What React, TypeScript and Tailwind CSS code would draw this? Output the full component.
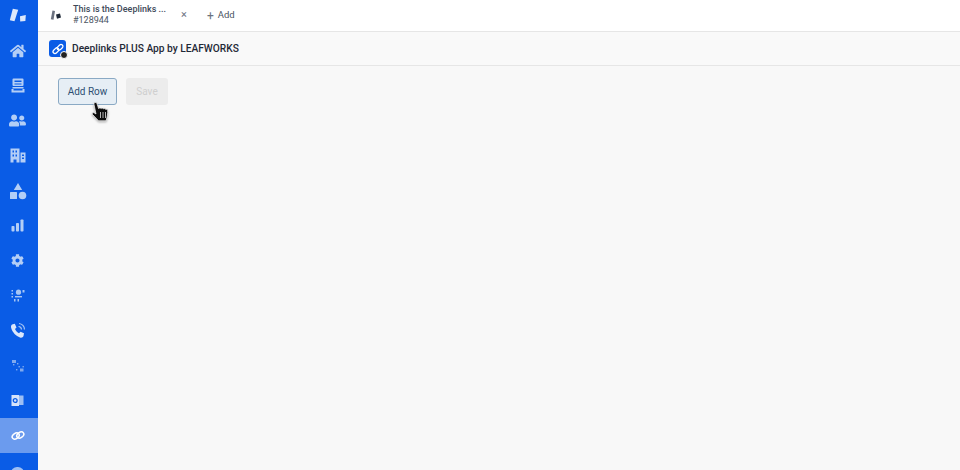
import React from "react";
import { FaHome, FaUserFriends, FaCog } from "react-icons/fa";

const ICON = "#b3cef6";

const Logo = () => (
  <svg width="20" height="20" viewBox="0 0 20 20">
    <path d="M4.800 2.800 10.200 3.700 6.500 15.200 1.800 14.200Z" fill="#dce8fb" />
    <path d="M12 10.200 17.800 9 17.400 15 12.200 15.600Z" fill="#dce8fb" />
  </svg>
);

const TabLogo = () => (
  <svg width="12" height="11" viewBox="0 0 12 11">
    <path d="M2.500 0.500 5 1 3.500 9.800 0.800 9.200Z" fill="#6b7280" />
    <path d="M6 4.500 10 3.500 11 7.500 7 8.800Z" fill="#1f2937" />
  </svg>
);

const Tickets = () => (
  <svg width="14" height="15" viewBox="0 0 14 15" fill={ICON}>
    <path fillRule="evenodd" d="M2.500 0.500h9a1 1 0 0 1 1 1v5.500a1 1 0 0 1-1 1h-9a1 1 0 0 1-1-1V1.500a1 1 0 0 1 1-1ZM3.500 2.500v1.500h7V2.500Zm0 3v1h7v-1Z" />
    <rect x="1.500" y="9" width="11" height="1.500" />
    <path d="M0.500 11h2v1.500h9V11h2v3.500h-13Z" />
  </svg>
);

const Org = () => (
  <svg width="16" height="15" viewBox="0 0 16 15" fill={ICON}>
    <path fillRule="evenodd" d="M0.500 0.500h9V14.500H6.500v-3h-3v3H0.500ZM2.500 2.500v2H4v-2Zm3 0v2H7v-2ZM2.500 6.500v2H4v-2Zm3 0v2H7v-2Z" />
    <path fillRule="evenodd" d="M10.500 4.500H15.500V14.500H10.500Zm1.500 2V8h2V6.500Zm0 3V11h2V9.500Z" />
  </svg>
);

const Shapes = () => (
  <svg width="18" height="18" viewBox="0 0 18 18" fill={ICON}>
    <path d="M9 1 13.200 8H4.800Z" />
    <rect x="1" y="10" width="7" height="7" rx="0.500" />
    <circle cx="13.500" cy="13.500" r="3.800" />
  </svg>
);

const Bars = () => (
  <svg width="13" height="13" viewBox="0 0 13 13" fill={ICON}>
    <rect x="0.500" y="7" width="3" height="5.500" rx="0.800" />
    <rect x="5" y="4" width="3" height="8.500" rx="0.800" />
    <rect x="9.500" y="0.500" width="3" height="12" rx="0.800" />
  </svg>
);

const Team = () => (
  <svg width="14" height="13" viewBox="0 0 14 13" fill="#a6c5f4">
    <circle cx="7.500" cy="3.200" r="2.600" />
    <rect x="4" y="7" width="7" height="1.400" />
    <rect x="0.500" y="1" width="1.500" height="1.500" />
    <rect x="0.500" y="4" width="1.500" height="1.500" />
    <rect x="0.500" y="7" width="1.500" height="1.500" />
    <rect x="3" y="10" width="1.500" height="2.500" />
    <rect x="6.500" y="10" width="1.500" height="2.500" />
    <rect x="11.500" y="1" width="2" height="2.500" />
  </svg>
);

const Phone = () => (
  <svg width="16" height="17" viewBox="0 0 16 17" fill="none">
    <path
      d="M2 2.500 4.800 1.800 6.500 5.500 5 7C5.700 8.800 7.300 10.500 9 11.200L10.500 9.800 14 11.300 13.500 14C13 15.500 11.500 16 10 15.500 6 14 2.500 10.500 1.200 6 .800 4.500 1 3.200 2 2.500Z"
      fill="#dbe7fb"
    />
    <path d="M9 1.500a6 6 0 0 1 5.500 6M8.500 4.500a3.200 3.200 0 0 1 3 3" stroke="#a6c5f4" strokeWidth="1.200" />
  </svg>
);

const Translate = () => (
  <svg width="14" height="14" viewBox="0 0 14 14" fill="#7fa9ee">
    <rect x="1" y="1" width="4" height="3" />
    <rect x="2" y="5" width="1.400" height="1.400" />
    <rect x="6" y="4" width="1.400" height="1.400" />
    <rect x="7.500" y="7" width="1.400" height="1.400" />
    <rect x="5" y="10" width="1.400" height="1.400" />
    <rect x="9" y="9.500" width="3.500" height="3" />
    <rect x="11.500" y="7" width="1.400" height="1.400" />
  </svg>
);

const Outlook = () => (
  <svg width="13" height="13" viewBox="0 0 13 13">
    <rect x="6" y="1.500" width="6.500" height="9.500" fill="#9dbff4" />
    <rect x="0.500" y="1" width="7.500" height="11" fill="#d5e3fa" />
    <circle cx="4.200" cy="6.500" r="1.900" fill="none" stroke="#0a5ce6" strokeWidth="1.300" />
  </svg>
);

const ChainWide = () => (
  <svg width="14" height="11" viewBox="0 0 14 11" fill="none" stroke="#ffffff" strokeWidth="1.500">
    <ellipse cx="4.700" cy="6" rx="3.800" ry="2.700" transform="rotate(-35 4.700 6)" />
    <ellipse cx="9.300" cy="5" rx="3.800" ry="2.700" transform="rotate(-35 9.300 5)" />
  </svg>
);

const ChainBadge = () => (
  <svg width="12" height="12" viewBox="0 0 12 12" fill="none" stroke="#ffffff" strokeWidth="1.300">
    <rect x="0.700" y="5.800" width="6.500" height="3.800" rx="1.900" transform="rotate(-45 3.950 7.700)" />
    <rect x="4.800" y="2.400" width="6.500" height="3.800" rx="1.900" transform="rotate(-45 8.050 4.300)" />
  </svg>
);

const navItems: React.ReactNode[] = [
  <FaHome key="home" size={16} color={ICON} />,
  <Tickets key="tickets" />,
  <FaUserFriends key="users" size={17} color={ICON} />,
  <Org key="org" />,
  <Shapes key="shapes" />,
  <Bars key="bars" />,
  <FaCog key="cog" size={13} color={ICON} />,
  <Team key="team" />,
  <Phone key="phone" />,
  <Translate key="translate" />,
  <Outlook key="outlook" />,
  <ChainWide key="link" />,
];

const HandCursor = () => (
  <svg
    width="20"
    height="21"
    viewBox="0 0 20 21"
    className="absolute left-[91px] top-[102px] drop-shadow-[0_1px_1px_rgba(0,0,0,0.35)]"
  >
    <path
      d="M3.500 .8c.9-.7 2.200-.3 2.500.8l1.600 5c.5-1 2-.9 2.500 0 .6-.8 2-.7 2.400.3.700-.6 2-.4 2.300.6.600-.4 1.700-.1 1.900.9.200 3-.3 6-1.600 10.400H7.500L1.500 12.500c-.8-1 .2-2.300 1.500-1.800L5 12 3 2.500c-.2-.7 0-1.300.5-1.700Z"
      fill="#0d0d0d"
      stroke="#ffffff"
      strokeWidth="0.700"
    />
    <path d="M9.500 10v6M12 10v6M14.500 10v6" stroke="#ffffff" strokeWidth="0.700" />
  </svg>
);

export default function App() {
  return (
    <div className="relative flex h-[470px] w-[960px] overflow-hidden bg-[#f8f8f8] font-['Roboto',sans-serif] text-[#1f2a37]">
      {/* sidebar */}
      <aside className="flex h-full w-[38px] shrink-0 flex-col overflow-hidden bg-[#0a5ce6]">
        <div className="flex h-[33px] shrink-0 items-center justify-center pr-[3px] pb-[1px]">
          <Logo />
        </div>
        {navItems.map((icon, idx) => (
          <div
            key={idx}
            className={`flex h-[35px] shrink-0 items-center justify-center pr-[3px] ${idx === 11 ? "bg-[#6b9bee]" : ""}`}
          >
            {icon}
          </div>
        ))}
        <div className="ml-[11px] mt-[14px] h-[12px] w-[13px] shrink-0 rounded-full bg-[#9dbff4]" />
      </aside>

      <main className="flex min-w-0 flex-1 flex-col">
        {/* tab bar */}
        <div className="flex h-[32px] items-center border-b border-[#e6e6e6] bg-white">
          <div className="ml-[12px] w-[20px]">
            <TabLogo />
          </div>
          <div className="ml-[3px] mb-[1px] w-[104px] leading-[11px]">
            <div className="whitespace-nowrap text-[9px] font-medium text-[#3f4a5a]">This is the Deeplinks ...</div>
            <div className="whitespace-nowrap text-[9px] text-[#4b5563]">#128944</div>
          </div>
          <span className="ml-[4px] text-[11px] text-[#6b7280]">×</span>
          <span className="ml-[20px] text-[12px] text-[#6b7280]">+</span>
          <span className="ml-[4px] text-[9.500px] text-[#4b5563]">Add</span>
        </div>

        {/* app header */}
        <div className="flex h-[34px] items-center border-b border-[#e6e6e6] bg-[#f9f9f9] pl-[11px]">
          <div className="relative flex h-[17px] w-[17px] items-center justify-center rounded-[3px] bg-[#0a5ce6]">
            <ChainBadge />
            <span className="absolute -bottom-[2px] -right-[2px] h-[8px] w-[8px] rounded-full border border-white bg-[#222222]" />
          </div>
          <span className="ml-[6px] text-[10.200px] font-medium text-[#1f2937]">Deeplinks PLUS App by LEAFWORKS</span>
        </div>

        {/* actions */}
        <div className="flex gap-[9px] pl-[20px] pt-[12px]">
          <button className="h-[27px] w-[59px] rounded-[3px] border border-[#8aa9c4] bg-[#e6eef5] text-[10px] text-[#2d4f73]">
            Add Row
          </button>
          <button className="h-[27px] w-[42px] rounded-[3px] bg-[#ececec] text-[10px] text-[#cfcfcf]">
            Save
          </button>
        </div>
      </main>

      <HandCursor />
    </div>
  );
}
